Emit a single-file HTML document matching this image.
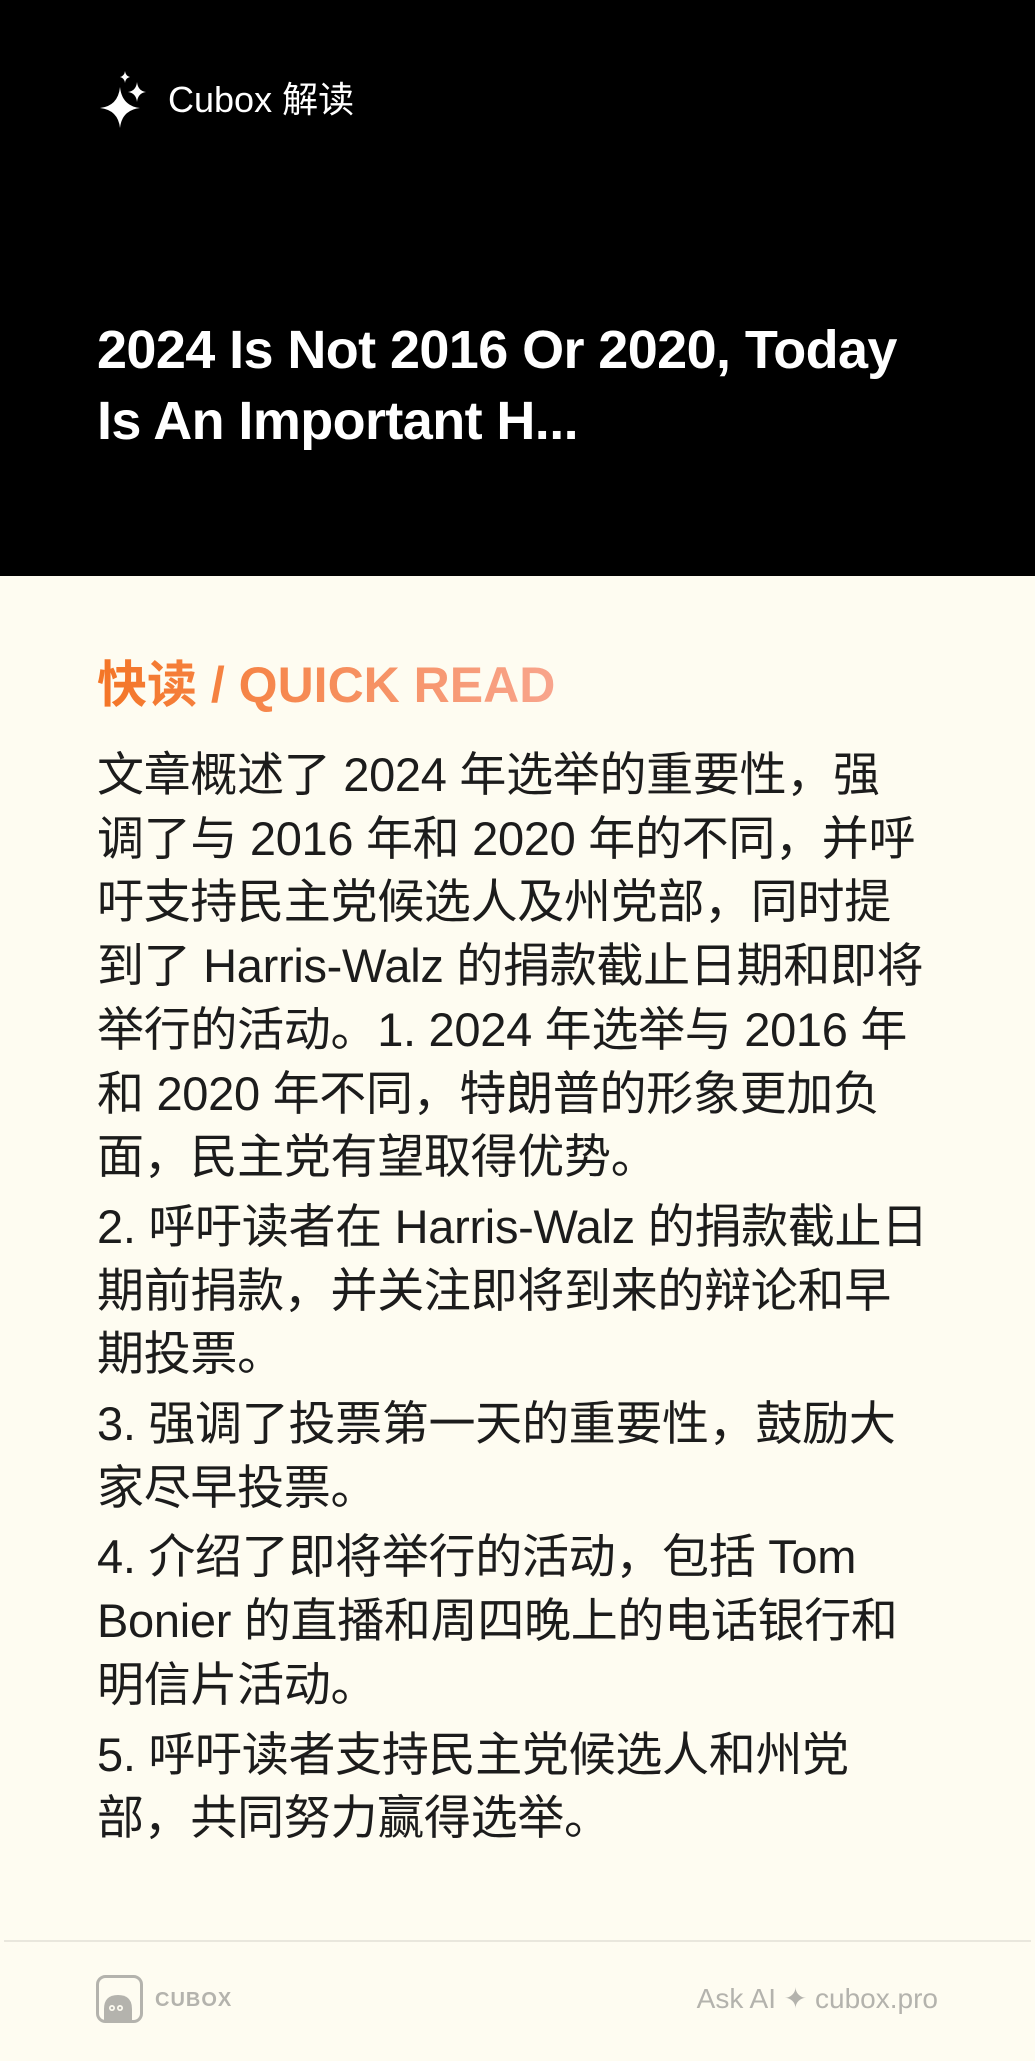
<!DOCTYPE html>
<html><head><meta charset="utf-8"><style>
*{margin:0;padding:0;box-sizing:border-box}
html,body{width:1035px;height:2061px;background:#fefcf1;overflow:hidden}
body{font-family:"Liberation Sans","Noto Sans CJK SC",sans-serif;position:relative}
.hdr{position:absolute;left:0;top:0;width:1035px;height:576px;background:#000}
.brand{position:absolute;left:168px;top:78px;color:#fff;font-size:36px;line-height:44px}
.title{position:absolute;left:97px;top:315px;color:#fff;font-weight:bold;font-size:54px;line-height:71px;white-space:nowrap;letter-spacing:-0.6px}
.qr{position:absolute;left:97px;top:655px;font-weight:bold;font-size:50px;line-height:60px;white-space:nowrap;background:linear-gradient(90deg,#f47526,#f8a58d);-webkit-background-clip:text;background-clip:text;color:transparent;width:460px}
.body{position:absolute;left:97px;top:743px;color:#1c1c1c;font-size:47px;line-height:63.7px;white-space:nowrap;letter-spacing:-0.3px}
.body p{margin-bottom:6px}
.div{position:absolute;left:4px;top:1940px;width:1027px;height:2px;background:#e9e7dd}
.cb{position:absolute;left:155px;top:1989px;color:#b4b3ad;font-weight:bold;font-size:20px;letter-spacing:1px}
.ask{position:absolute;right:97px;top:1981px;color:#b4b3ad;font-size:28px;line-height:36px}
</style></head><body>
<div class="hdr">
<svg style="position:absolute;left:95px;top:70px" width="60" height="60" viewBox="95 70 60 60">
<path d="M120 87 Q122 106 140 108 Q122 110 120 128 Q118 110 100 108 Q118 106 120 87Z" fill="#fff"/>
<path d="M137 82 Q138 91 146 92 Q138 93 137 102 Q136 93 128 92 Q136 91 137 82Z" fill="#fff"/>
<path d="M125 71 Q125.6 76 130 77 Q125.6 78 125 83 Q124.4 78 120 77 Q124.4 76 125 71Z" fill="#fff"/>
</svg>
<div class="brand">Cubox 解读</div>
<div class="title">2024 Is Not 2016 Or 2020, Today<br>Is An Important H...</div>
</div>
<div class="qr">快读 / QUICK READ</div>
<div class="body">
<p>文章概述了 2024 年选举的重要性，强<br>调了与 2016 年和 2020 年的不同，并呼<br>吁支持民主党候选人及州党部，同时提<br>到了 Harris-Walz 的捐款截止日期和即将<br>举行的活动。1. 2024 年选举与 2016 年<br>和 2020 年不同，特朗普的形象更加负<br>面，民主党有望取得优势。</p>
<p>2. 呼吁读者在 Harris-Walz 的捐款截止日<br>期前捐款，并关注即将到来的辩论和早<br>期投票。</p>
<p>3. 强调了投票第一天的重要性，鼓励大<br>家尽早投票。</p>
<p>4. 介绍了即将举行的活动，包括 Tom<br>Bonier 的直播和周四晚上的电话银行和<br>明信片活动。</p>
<p>5. 呼吁读者支持民主党候选人和州党<br>部，共同努力赢得选举。</p>
</div>
<div class="div"></div>
<svg style="position:absolute;left:96px;top:1975px" width="48" height="49" viewBox="0 0 48 49">
<rect x="1.5" y="1.5" width="44" height="45" rx="8" fill="none" stroke="#b4b3ad" stroke-width="3"/>
<path d="M8 46 L8 34 Q8 20 22 20 Q36 20 36 34 L36 46Z" fill="#b4b3ad"/>
<circle cx="16" cy="33" r="3" fill="#fefcf1"/><circle cx="24" cy="33" r="3" fill="#fefcf1"/>
<circle cx="16" cy="33" r="1.3" fill="#b4b3ad"/><circle cx="24" cy="33" r="1.3" fill="#b4b3ad"/>
</svg>
<div class="cb">CUBOX</div>
<div class="ask">Ask AI ✦ cubox.pro</div>
</body></html>
